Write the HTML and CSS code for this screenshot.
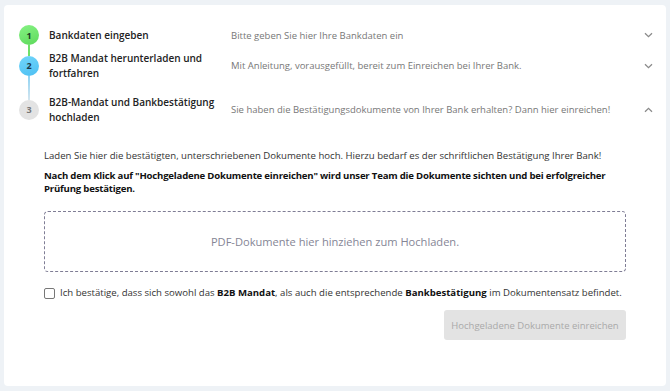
FILE: index.html
```html
<!DOCTYPE html>
<html lang="de">
<head>
    <meta charset="UTF-8">
    <meta name="viewport" content="width=device-width, initial-scale=1.0">
    <title>B2B Mandat hochladen</title>
    <link rel="stylesheet" href="styles.css">
</head>
<body>

<div class="card">
    <div class="steps">
        <div class="step">
            <div class="step-marker done">1</div>
            <div class="step-title">Bankdaten eingeben</div>
            <div class="step-desc">Bitte geben Sie hier Ihre Bankdaten ein</div>
            <svg class="chevron" width="9" height="6" viewBox="0 0 9 6"><path d="M1 1.2 L4.5 4.6 L8 1.2" /></svg>
        </div>

        <div class="step">
            <div class="step-marker active line-green">2</div>
            <div class="step-title">B2B Mandat herunterladen und fortfahren</div>
            <div class="step-desc">Mit Anleitung, vorausgefüllt, bereit zum Einreichen bei Ihrer Bank.</div>
            <svg class="chevron" width="9" height="6" viewBox="0 0 9 6"><path d="M1 1.2 L4.5 4.6 L8 1.2" /></svg>
        </div>

        <div class="step open">
            <div class="step-marker line-blue">3</div>
            <div class="step-title">B2B-Mandat und Bankbestätigung hochladen</div>
            <div class="step-desc">Sie haben die Bestätigungsdokumente von Ihrer Bank erhalten? Dann hier einreichen!</div>
            <svg class="chevron" width="9" height="6" viewBox="0 0 9 6"><path d="M1 4.8 L4.5 1.4 L8 4.8" /></svg>
        </div>
    </div>

    <div class="upload">
        <p class="intro">Laden Sie hier die bestätigten, unterschriebenen Dokumente hoch. Hierzu bedarf es der schriftlichen Bestätigung Ihrer Bank!</p>
        <p class="notice">Nach dem Klick auf "Hochgeladene Dokumente einreichen" wird unser Team die Dokumente sichten und bei erfolgreicher Prüfung bestätigen.</p>

        <div class="dropzone">PDF-Dokumente hier hinziehen zum Hochladen.</div>

        <label class="confirm">
            <input type="checkbox">
            <span>Ich bestätige, dass sich sowohl das <b>B2B Mandat</b>, als auch die entsprechende <b>Bankbestätigung</b> im Dokumentensatz befindet.</span>
        </label>

        <div class="actions">
            <button class="submit" disabled>Hochgeladene Dokumente einreichen</button>
        </div>
    </div>
</div>

</body>
</html>
```
FILE: styles.css
```css
body {
    font-family: 'Open Sans', 'Liberation Sans', sans-serif;
    background-color: #eef2f6;
    padding: 5px 4px;
    margin: 0;
    color: #222;
}

.card {
    background-color: #ffffff;
    border-radius: 4px;
    height: 381px;
    box-sizing: border-box;
    padding: 20px 13px 0 15px;
}

.steps {
    display: flex;
    flex-direction: column;
}

.step {
    display: flex;
    align-items: center;
    min-height: 20px;
}

.step + .step {
    margin-top: 6px;
}

.step.open {
    margin-top: 15px;
}

.step-marker {
    position: relative;
    flex: 0 0 20px;
    height: 20px;
    border-radius: 50%;
    background-color: #e3e3e3;
    color: #777;
    font-size: 9px;
    font-weight: 700;
    display: flex;
    align-items: center;
    justify-content: center;
}

.step-marker.done {
    background: linear-gradient(160deg, #86f284, #5dd95b);
    color: #1d3a26;
}

.step-marker.active {
    background: linear-gradient(160deg, #72d6fb, #4dbff2);
    color: #1d3a4a;
}

.step-marker::before {
    content: '';
    position: absolute;
    left: 9px;
    bottom: 100%;
    width: 2px;
}

.line-green::before {
    height: 11px;
    background-color: #6fe06a;
}

.line-blue::before {
    height: 24px;
    background: linear-gradient(#8fd3f3, #d4e5ef);
}

.step-title {
    flex: 0 0 172px;
    margin-left: 10px;
    padding-right: 10px;
    font-size: 10px;
    font-weight: 600;
    line-height: 14.5px;
    color: #222;
}

.step-desc {
    flex: 1;
    font-size: 9.5px;
    color: #777;
}

.chevron {
    flex: 0 0 9px;
}

.chevron path {
    fill: none;
    stroke: #8a8a8a;
    stroke-width: 1.3;
}

.upload {
    padding: 25px 27px 0 25px;
}

.intro {
    margin: 0;
    font-size: 9.6px;
    line-height: 14px;
    color: #333;
}

.notice {
    margin: 6px 0 0;
    font-size: 9.6px;
    font-weight: 700;
    letter-spacing: -0.2px;
    line-height: 13px;
    color: #111;
}

.dropzone {
    margin-top: 16px;
    height: 61px;
    box-sizing: border-box;
    border: 1px dashed #7f7d95;
    border-radius: 4px;
    display: flex;
    align-items: center;
    justify-content: center;
    font-size: 11.1px;
    color: #858595;
}

.confirm {
    margin-top: 14px;
    display: flex;
    align-items: center;
    font-size: 9.6px;
    line-height: 14px;
    color: #333;
}

.confirm input {
    appearance: none;
    width: 11px;
    height: 11px;
    margin: 0 5px 0 0;
    border: 1.5px solid #777;
    border-radius: 2px;
    box-sizing: border-box;
}

.confirm b {
    color: #111;
}

.actions {
    display: flex;
    justify-content: flex-end;
    margin-top: 10px;
}

.submit {
    width: 182px;
    height: 30px;
    padding: 0;
    border: none;
    border-radius: 3px;
    background-color: #e3e3e3;
    color: #a9a9a9;
    font-family: inherit;
    font-size: 9.5px;
    white-space: nowrap;
    cursor: not-allowed;
}
```
